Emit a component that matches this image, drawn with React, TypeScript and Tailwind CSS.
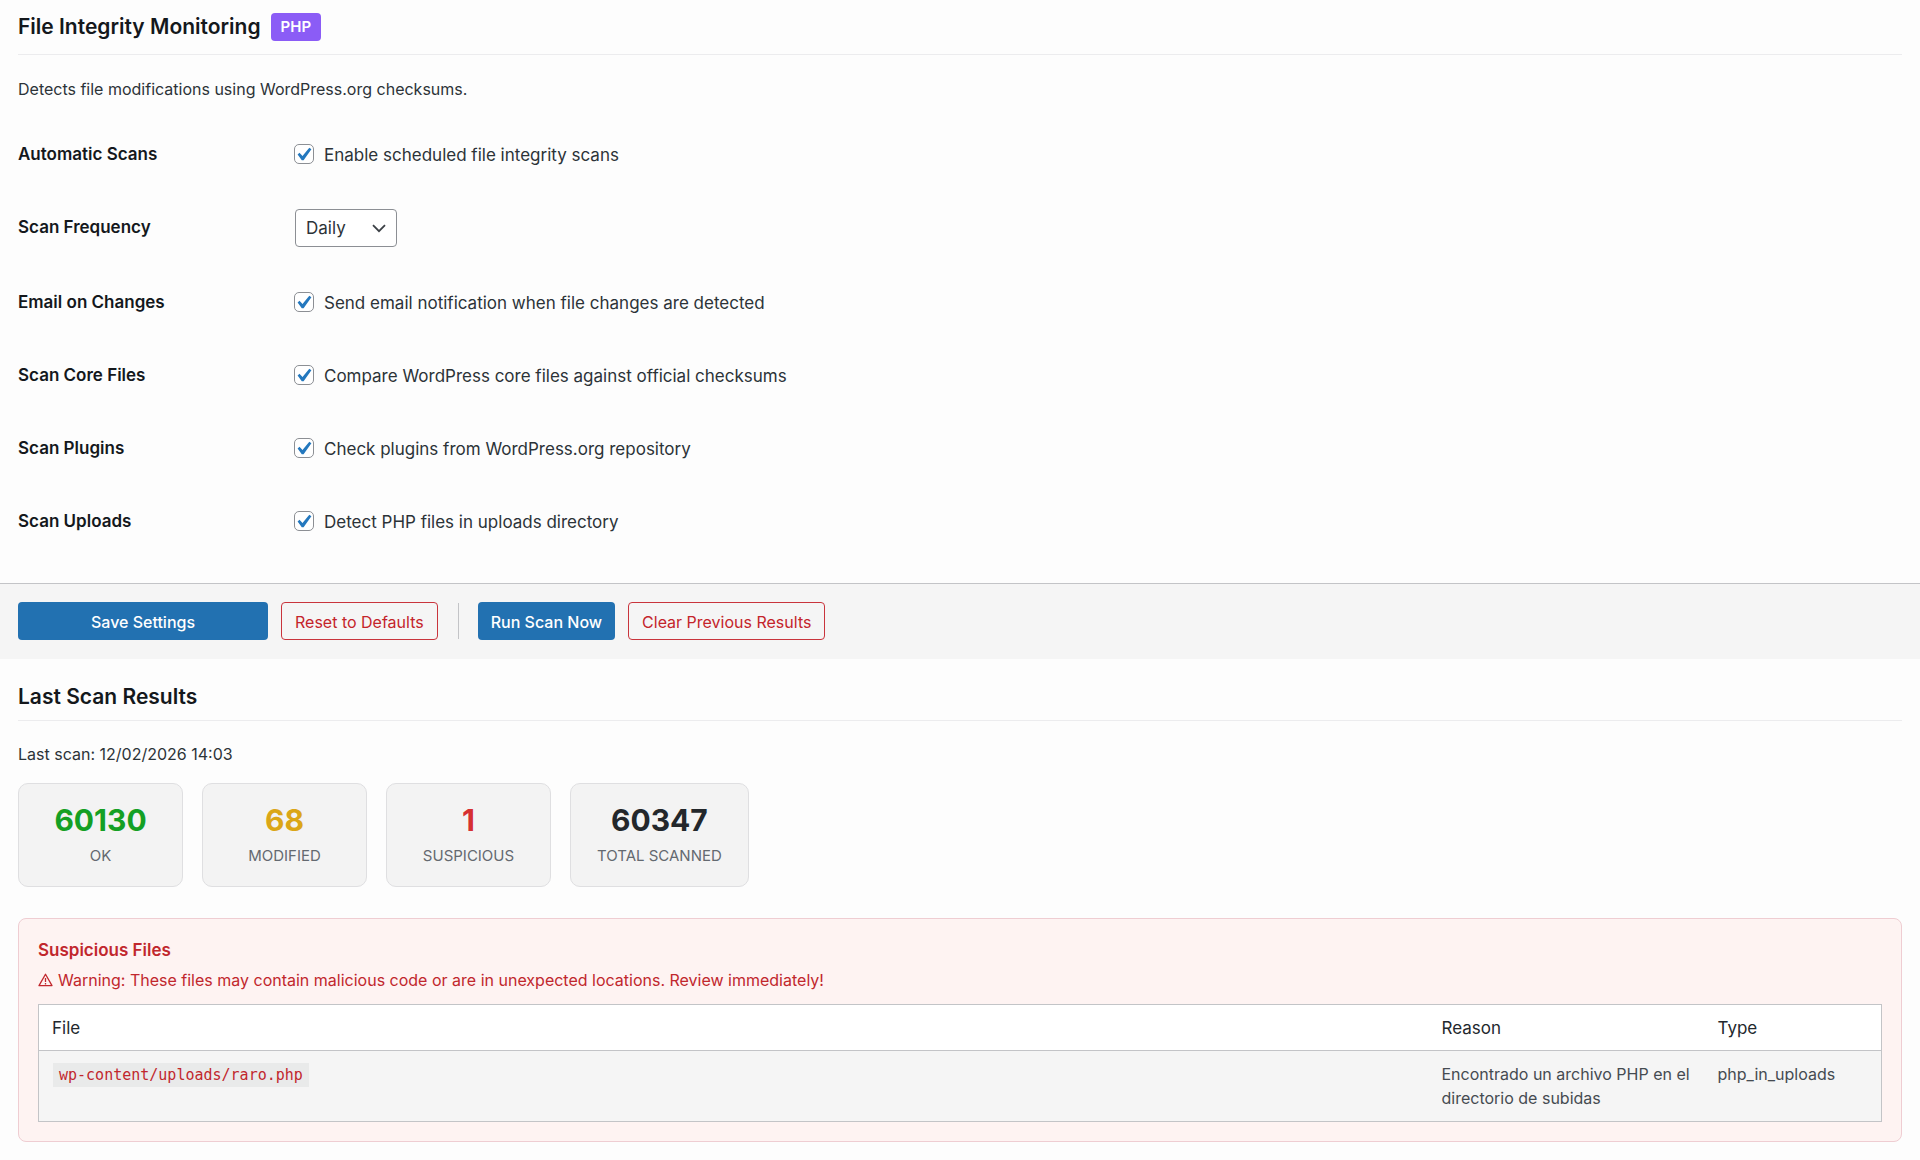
import { useState } from "react";

type CheckRow = { id: string; title: string; text: string };

const autoScan: CheckRow = {
  id: "auto-scan",
  title: "Automatic Scans",
  text: "Enable scheduled file integrity scans",
};

const scanOptions: CheckRow[] = [
  { id: "email-changes", title: "Email on Changes", text: "Send email notification when file changes are detected" },
  { id: "scan-core", title: "Scan Core Files", text: "Compare WordPress core files against official checksums" },
  { id: "scan-plugins", title: "Scan Plugins", text: "Check plugins from WordPress.org repository" },
  { id: "scan-uploads", title: "Scan Uploads", text: "Detect PHP files in uploads directory" },
];

const stats = [
  { value: "60130", label: "OK", color: "text-[#14a024]" },
  { value: "68", label: "MODIFIED", color: "text-[#dba617]" },
  { value: "1", label: "SUSPICIOUS", color: "text-[#d63031]" },
  { value: "60347", label: "TOTAL SCANNED", color: "text-[#23272b]" },
];

const primary = "h-[38px] rounded-[4px] bg-[#2271b1] px-[13px] pt-px text-base font-medium text-white";
const danger = "h-[38px] rounded-[4px] border border-[#c9343c] px-[13px] pt-px text-base text-[#c4242b]";

function OptionRow({ row }: { row: CheckRow }) {
  const [checked, setChecked] = useState(true);
  return (
    <div className="flex h-[73px] items-start pt-[25px]">
      <div className="w-[276px] shrink-0 text-[17px] leading-6 font-semibold text-[#14181c]">{row.title}</div>
      <label htmlFor={row.id} className="flex items-start gap-[10px] text-[17px] leading-[26px] text-[#2c3338]">
        <span className="relative mt-0.5 flex">
          <input
            id={row.id}
            type="checkbox"
            checked={checked}
            onChange={() => setChecked(!checked)}
            className="size-5 appearance-none rounded-[5px] border border-[#8c8f94] bg-white"
          />
          {checked && (
            <svg viewBox="0 0 20 20" className="pointer-events-none absolute inset-0 size-5" fill="#2478be" aria-hidden="true">
              <path d="M15.3 3.8 17.4 5.2 9.6 16.2H7.8L3.6 10.6 5.5 8.8 8.5 11.9Z" />
            </svg>
          )}
        </span>
        {row.text}
      </label>
    </div>
  );
}

export default function App() {
  return (
    <main className="min-h-screen bg-[#fdfdfd] font-['Inter',sans-serif] text-[#2c3338]">
      <section className="px-[18px]">
        <header className="flex h-[55px] items-center gap-[10px] border-b border-[#ececee]">
          <h2 className="text-[21px] leading-7 font-semibold text-[#14181c]">File Integrity Monitoring</h2>
          <span className="rounded-[4px] bg-[#8b5cf6] px-[10px] py-1 text-[15px] leading-5 font-semibold text-white">PHP</span>
        </header>
        <p className="mt-[22px] text-base leading-6">Detects file modifications using WordPress.org checksums.</p>
        <div className="mt-4 pb-[26px]">
          <OptionRow row={autoScan} />
          <div className="flex h-[75px] items-center">
            <label htmlFor="frequency" className="w-[277px] shrink-0 text-[17px] font-semibold text-[#14181c]">
              Scan Frequency
            </label>
            <div className="relative">
              <select
                id="frequency"
                defaultValue="Daily"
                className="h-[38px] w-[102px] appearance-none rounded-[4px] border border-[#8c8f94] bg-white pt-0.5 pl-[10px] text-[17px] text-[#2c3338]"
              >
                <option>Daily</option>
                <option>Weekly</option>
              </select>
              <svg viewBox="0 0 14 9" className="pointer-events-none absolute top-[15px] right-[11px] h-[9px] w-[14px]" fill="none" aria-hidden="true">
                <path d="M1 1.2 7 7.2 13 1.2" stroke="#3c4146" strokeWidth="1.8" />
              </svg>
            </div>
          </div>
          {scanOptions.map((row) => (
            <OptionRow key={row.id} row={row} />
          ))}
        </div>
      </section>

      <div className="flex h-[76px] items-center border-t border-[#c3c4c7] bg-[#f5f5f5] px-[18px] pb-px">
        <button type="button" className={`${primary} w-[250px]`}>Save Settings</button>
        <button type="button" className={`${danger} ml-[13px]`}>Reset to Defaults</button>
        <div className="mr-[19px] ml-5 h-9 w-px bg-[#c3c4c7]" />
        <button type="button" className={primary}>Run Scan Now</button>
        <button type="button" className={`${danger} ml-[13px]`}>Clear Previous Results</button>
      </div>

      <section className="px-[18px] pb-3">
        <header className="flex h-[62px] items-end border-b border-[#ececee] pb-[9px]">
          <h2 className="text-[21px] leading-7 font-semibold text-[#14181c]">Last Scan Results</h2>
        </header>
        <p className="mt-[21px] text-base leading-6">Last scan: 12/02/2026 14:03</p>
        <div className="mt-[17px] flex gap-[19px]">
          {stats.map((s) => (
            <div
              key={s.label}
              className="flex h-[104px] min-w-[165px] flex-col items-center rounded-[10px] border border-[#dfdfe1] bg-[#f3f3f3] px-[26px] pt-4"
            >
              <div className={`text-[30px] leading-10 font-bold ${s.color}`}>{s.value}</div>
              <div className="mt-1 text-[15px] leading-6 text-[#646970]">{s.label}</div>
            </div>
          ))}
        </div>

        <div className="mt-[31px] rounded-[8px] border border-[#efcdd2] bg-[#fef3f2] p-[19px]">
          <h3 className="text-[17px] leading-6 font-semibold text-[#c1272d]">Suspicious Files</h3>
          <p className="mt-[6px] flex items-center gap-[5px] text-base leading-6 text-[#c1272d]">
            <svg viewBox="0 0 15 14" className="h-[14px] w-[15px]" fill="none" stroke="#c1272d" strokeWidth="1.3" strokeLinejoin="round" aria-hidden="true">
              <path d="M7.5 1.2 1 12.6h13Z" />
              <path d="M7.5 5v4M7.5 10v1.4" />
            </svg>
            Warning: These files may contain malicious code or are in unexpected locations. Review immediately!
          </p>
          <table className="mt-3 w-full table-fixed border-collapse border border-[#c3c4c7] text-left">
            <colgroup>
              <col />
              <col className="w-[276px]" />
              <col className="w-[177px]" />
            </colgroup>
            <thead>
              <tr className="h-[46px] border-b border-[#c3c4c7] bg-white text-[17px] text-[#23282d]">
                <th scope="col" className="px-[13px] pt-0.5 font-normal">File</th>
                <th scope="col" className="px-[13px] pt-0.5 font-normal">Reason</th>
                <th scope="col" className="px-[13px] pt-0.5 font-normal">Type</th>
              </tr>
            </thead>
            <tbody>
              <tr className="bg-[#f5f5f5] align-top text-base leading-6 text-[#454b51]">
                <td className="px-[14px] py-[11px]">
                  <code className="bg-[#e9eaea] px-[6px] py-[3px] font-['DejaVu_Sans_Mono',monospace] text-[15px] leading-4 text-[#c1272d]">
                    wp-content/uploads/raro.php
                  </code>
                </td>
                <td className="px-[13px] py-[11px]">Encontrado un archivo PHP en el directorio de subidas</td>
                <td className="px-[13px] py-[11px]">php_in_uploads</td>
              </tr>
            </tbody>
          </table>
        </div>
      </section>
    </main>
  );
}
